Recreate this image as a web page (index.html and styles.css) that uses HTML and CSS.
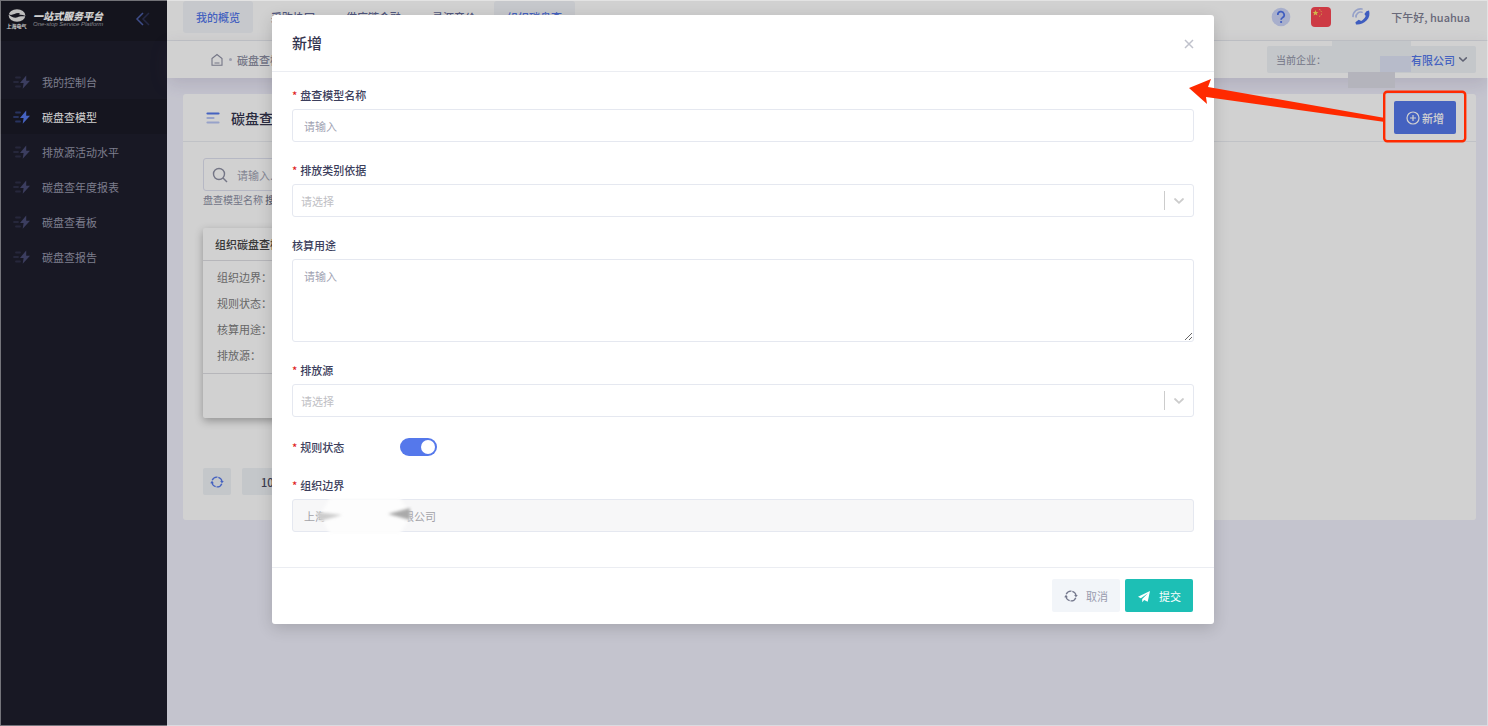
FILE: index.html
```
<!DOCTYPE html>
<html lang="zh-CN">
<head>
    <meta charset="UTF-8">
    <meta name="viewport" content="width=device-width, initial-scale=1.0">
    <title>碳盘查模型</title>
    <link rel="stylesheet" href="styles.css">
</head>
<body>
    <!-- shared icons -->
    <svg class="sprite" aria-hidden="true">
        <symbol id="icon-bolt" viewBox="0 0 18 14">
            <path d="M3 2.500h4M1 7h4M3 11.500h4" fill="none" stroke="currentColor" stroke-width="1.800" stroke-linecap="round" opacity=".4"/>
            <path d="M13.200 .4L7 8h3.600L9.700 13.800 17 5.800h-3.800z" fill="currentColor"/>
        </symbol>
        <symbol id="icon-refresh" viewBox="0 0 14 14">
            <path d="M2.200 5.300A5.100 5.100 0 0 1 12 6.500M11.800 8.700A5.100 5.100 0 0 1 2 7.500" fill="none" stroke="currentColor" stroke-width="1.300" stroke-dasharray="6.500 .9"/>
            <path d="M.2 8.200L2 5.800l1.900 2.400zM10.100 5.900h3.700L12 8.300z" fill="currentColor"/>
        </symbol>
        <symbol id="icon-chevron" viewBox="0 0 12 8">
            <path d="M2 2l4 3.800L10 2" fill="none" stroke="currentColor" stroke-width="1.800" stroke-linecap="round"/>
        </symbol>
    </svg>

    <div class="layout">
        <aside class="sidebar">
            <div class="brand">
                <div class="brand-mark">
                    <svg width="18" height="13" viewBox="0 0 18 13">
                        <ellipse cx="9" cy="6.500" rx="8.300" ry="6.200" fill="#e8e8e8"/>
                        <path d="M0 4.800C4 7.800 7 3.500 11 4.200c1.500.3 1 1.200-.5 1.600 3 0 5.500.2 7.500 1.500-4 .2-6-.4-8.500 1C7 9.500 3 8 0 4.800z" fill="#1a1a27"/>
                    </svg>
                    <span>上海电气</span>
                </div>
                <div class="brand-text">
                    <strong>一站式服务平台</strong>
                    <em>One-stop Service Platform</em>
                </div>
                <button class="collapse" type="button" aria-label="收起菜单">
                    <svg width="16" height="14" viewBox="0 0 16 14" fill="none" stroke-width="1.500">
                        <path d="M8 1L2 7l6 6" stroke="#4c5ea8"/>
                        <path d="M14 1L8 7l6 6" stroke="#2d3155"/>
                    </svg>
                </button>
            </div>
            <nav class="menu">
                <a href="#"><svg><use href="#icon-bolt"/></svg>我的控制台</a>
                <a href="#" class="active"><svg><use href="#icon-bolt"/></svg>碳盘查模型</a>
                <a href="#"><svg><use href="#icon-bolt"/></svg>排放源活动水平</a>
                <a href="#"><svg><use href="#icon-bolt"/></svg>碳盘查年度报表</a>
                <a href="#"><svg><use href="#icon-bolt"/></svg>碳盘查看板</a>
                <a href="#"><svg><use href="#icon-bolt"/></svg>碳盘查报告</a>
            </nav>
        </aside>

        <div class="page">
            <header class="topbar">
                <nav class="tabs">
                    <a href="#" class="active">我的概览</a>
                    <a href="#">采购协同</a>
                    <a href="#">供应链金融</a>
                    <a href="#">寻源竞价</a>
                    <a href="#" class="active">组织碳盘查</a>
                </nav>
                <div class="tools">
                    <button type="button" aria-label="帮助">
                        <svg width="20" height="20" viewBox="0 0 20 20">
                            <circle cx="10" cy="10" r="9.300" fill="#cdd6f9"/>
                            <path d="M6.800 8a3.200 3.200 0 1 1 4.800 2.600c-1.100.7-1.500 1-1.500 2.100" fill="none" stroke="#4d72ea" stroke-width="1.700"/>
                            <circle cx="10.100" cy="15" r="1.100" fill="#4d72ea"/>
                        </svg>
                    </button>
                    <button type="button" aria-label="语言">
                        <svg width="20" height="20" viewBox="0 0 20 20">
                            <rect width="20" height="20" rx="4" fill="#fb4754"/>
                            <path d="M4.500 3l.8 2h2.200L5.800 6.300l.6 2.100-1.900-1.200-1.900 1.200.6-2.100L1.500 5h2.200z" fill="#ffe15a"/>
                            <path d="M8.200 2.500l1.200.5M10 4.300l.8.800M10 7.500l.9-.6M8.200 9.300l1.100-.4" stroke="#ffe15a" stroke-width="1"/>
                        </svg>
                    </button>
                    <button type="button" aria-label="电话">
                        <svg width="20" height="20" viewBox="0 0 20 20">
                            <path d="M2 9.500A7.500 7.500 0 0 1 11 2M5 10a4.700 4.700 0 0 1 6-4.800" fill="none" stroke="#b8c5f5" stroke-width="1.700" stroke-linecap="round"/>
                            <path d="M15.500 4.200l2.500-.7c1 3.500.5 7-2.500 10s-7 4.500-10.500 4l-.6-2.300 3.300-2.500 2.500 1.200c2-1 3.800-2.800 4.500-4.800l-1.300-2z" fill="#4d72ea"/>
                        </svg>
                    </button>
                    <span class="greeting">下午好, huahua</span>
                </div>
            </header>

            <div class="subheader">
                <div class="crumbs">
                    <svg width="14" height="14" viewBox="0 0 14 14" fill="none" stroke="currentColor" stroke-width="1.100">
                        <path d="M2 5.500L7 1.500l5 4v6.800H2zM4.500 10h5"/>
                    </svg>
                    <i></i>
                    <span>碳盘查模型</span>
                </div>
                <button class="company" type="button">
                    <span>当前企业：</span>
                    <b>技有限公司</b>
                    <svg width="10" height="7"><use href="#icon-chevron"/></svg>
                    <span class="mask mask-top"></span>
                    <span class="mask mask-mid"></span>
                    <span class="mask mask-low"></span>
                </button>
            </div>

            <main class="panel">
                <div class="panel-head">
                    <svg width="14" height="12" viewBox="0 0 14 12" stroke-width="2.200" stroke-linecap="round">
                        <path d="M1.500 1.500h11" stroke="#5578eb"/>
                        <path d="M1.500 6h6M1.500 10.500h11" stroke="#b9c6f6"/>
                    </svg>
                    <h1>碳盘查模型</h1>
                    <button class="add" type="button">
                        <svg width="14" height="14" viewBox="0 0 14 14" fill="none" stroke="#fff" stroke-width="1.200">
                            <circle cx="7" cy="7" r="6"/>
                            <path d="M7 4v6M4 7h6"/>
                        </svg>
                        新增
                    </button>
                </div>
                <div class="panel-body">
                    <label class="search">
                        <svg width="16" height="16" viewBox="0 0 16 16" fill="none" stroke="currentColor" stroke-width="1.400">
                            <circle cx="7" cy="7" r="5.500"/>
                            <path d="M11 11l4 4"/>
                        </svg>
                        <input type="text" placeholder="请输入..." aria-label="搜索">
                    </label>
                    <p class="hint">盘查模型名称 <b>搜索</b></p>

                    <section class="model">
                        <h2>组织碳盘查模型</h2>
                        <ul>
                            <li>组织边界：</li>
                            <li>规则状态：</li>
                            <li>核算用途：</li>
                            <li>排放源：</li>
                        </ul>
                        <div class="model-foot"></div>
                    </section>

                    <div class="pager">
                        <button type="button" class="reload" aria-label="刷新"><svg width="14" height="14"><use href="#icon-refresh"/></svg></button>
                        <select aria-label="每页条数"><option>10</option><option>20</option></select>
                    </div>
                </div>
            </main>
        </div>
    </div>

    <div class="backdrop">
        <div class="modal" role="dialog" aria-labelledby="modal-title">
            <div class="modal-head">
                <h2 id="modal-title">新增</h2>
                <button class="close" type="button" aria-label="关闭">
                    <svg width="10" height="10" viewBox="0 0 10 10" stroke="currentColor" stroke-width="1.500"><path d="M1 1l8 8M9 1L1 9"/></svg>
                </button>
            </div>
            <form class="modal-body">
                <div class="field">
                    <label for="name" class="required">盘查模型名称</label>
                    <input id="name" type="text" placeholder="请输入">
                </div>
                <div class="field">
                    <label for="category" class="required">排放类别依据</label>
                    <div class="select">
                        <select id="category"><option>请选择</option></select>
                        <svg width="12" height="8"><use href="#icon-chevron"/></svg>
                    </div>
                </div>
                <div class="field">
                    <label for="usage">核算用途</label>
                    <textarea id="usage" placeholder="请输入"></textarea>
                </div>
                <div class="field">
                    <label for="source" class="required">排放源</label>
                    <div class="select">
                        <select id="source"><option>请选择</option></select>
                        <svg width="12" height="8"><use href="#icon-chevron"/></svg>
                    </div>
                </div>
                <div class="field-row">
                    <label for="status" class="required">规则状态</label>
                    <input id="status" class="switch" type="checkbox" checked>
                </div>
                <div class="field">
                    <label for="org" class="required">组织边界</label>
                    <div class="masked">
                        <input id="org" type="text" value="上海　　　　　　　限公司" disabled>
                        <svg class="smudge" width="110" height="44" viewBox="0 0 110 44">
                            <defs><filter id="soft"><feGaussianBlur stdDeviation="1.500"/></filter></defs>
                            <path d="M14 3h70l8 12 2 8-10 16H14L8 28l-4-8z" fill="#fdfdfd" filter="url(#soft)"/>
                            <path d="M0 17l26 3-22 6z" fill="#ccc" filter="url(#soft)"/>
                            <path d="M72 19l22-6v12z" fill="#aaa" filter="url(#soft)"/>
                        </svg>
                    </div>
                </div>
            </form>
            <div class="modal-foot">
                <button class="btn cancel" type="button"><svg width="14" height="14"><use href="#icon-refresh"/></svg>取消</button>
                <button class="btn submit" type="button">
                    <svg width="14" height="14" viewBox="0 0 14 14"><path d="M13 2L1 7.800l2.800 1.500L11 4.200 5.200 9.900v3.300l2-2.200 3.500 1.700z" fill="#fff"/></svg>
                    提交
                </button>
            </div>
        </div>
    </div>

    <!-- arrow from the add button to the dialog -->
    <svg class="callout" width="282" height="68" viewBox="0 0 282 68" aria-hidden="true">
        <path d="M3 12L25 3l-3 8 177 31v4L20 21l1 7z" fill="#ff2a00"/>
        <rect x="198.200" y="15.800" width="81" height="49.500" rx="3" fill="none" stroke="#ff2a00" stroke-width="2.400"/>
    </svg>
</body>
</html>
```
FILE: styles.css
```
* {
    box-sizing: border-box;
}

body {
    margin: 0;
    position: relative;
    min-height: 100vh;
    font-family: "Noto Sans CJK SC", "Noto Sans", sans-serif;
    font-size: 11px;
    color: #646c9a;
    background-color: #f0f0fc;
}

body::after {
    content: "";
    position: absolute;
    inset: 0;
    border: 1px solid rgba(255, 255, 255, 0.4);
    pointer-events: none;
    z-index: 30;
}

h1, h2, p, ul {
    margin: 0;
    padding: 0;
}

ul {
    list-style: none;
}

a {
    color: inherit;
    text-decoration: none;
}

button, input, select, textarea {
    font-family: inherit;
    font-size: 11px;
    color: inherit;
}

button {
    border: none;
    padding: 0;
    background: none;
    cursor: pointer;
}

svg {
    display: block;
    flex: none;
}

.sprite {
    position: absolute;
    width: 0;
    height: 0;
}

.layout {
    display: flex;
    min-height: 100vh;
}

/* sidebar */
.sidebar {
    width: 167px;
    flex: none;
    background-color: #1e1e2d;
}

.brand {
    display: flex;
    align-items: center;
    height: 41px;
    padding: 0 16px 4px 6px;
    background-color: #191924;
    color: #fff;
}

.brand-mark {
    display: flex;
    flex-direction: column;
    align-items: center;
    width: 21px;
    font-size: 5px;
    font-weight: bold;
    line-height: 7px;
    white-space: nowrap;
}

.brand-text {
    margin-left: 6px;
    white-space: nowrap;
}

.brand-text strong {
    display: block;
    font-size: 10px;
    font-style: italic;
    font-weight: 900;
    line-height: 11px;
}

.brand-text em {
    display: block;
    font-family: "Liberation Sans", sans-serif;
    font-size: 6px;
    line-height: 7px;
    color: #a5a5ae;
}

.collapse {
    margin-left: auto;
}

.menu {
    padding-top: 23px;
}

.menu a {
    display: flex;
    align-items: center;
    gap: 11px;
    height: 35px;
    padding-left: 13px;
    color: #9899ac;
}

.menu svg {
    width: 18px;
    height: 14px;
    color: #494b74;
}

.menu .active {
    background-color: #1a1a27;
    color: #fff;
}

.menu .active svg {
    color: #5578eb;
}

/* top area */
.page {
    flex: 1;
    min-width: 0;
}

.topbar {
    display: flex;
    justify-content: space-between;
    height: 41px;
    padding: 1px 18px 0 16px;
    background-color: #fff;
    border-bottom: 1px solid #ebedf2;
}

.tabs {
    display: flex;
    gap: 5px;
    font-weight: 500;
}

.tabs a {
    height: 32px;
    padding: 0 13px;
    line-height: 33px;
    border-radius: 3px;
}

.tabs .active {
    background-color: #f2f5f9;
    color: #5578eb;
}

.tools {
    display: flex;
    align-items: center;
    gap: 20px;
    padding-bottom: 7px;
}

.greeting {
    color: #7f8194;
    font-weight: 500;
}

.subheader {
    display: flex;
    align-items: center;
    justify-content: space-between;
    height: 37px;
    padding: 0 12px 0 43px;
    background-color: #fff;
    box-shadow: 0 6px 18px rgba(82, 63, 105, 0.15);
}

.crumbs {
    display: flex;
    align-items: center;
    gap: 5px;
    color: #8e90a4;
    font-weight: 500;
}

.crumbs i {
    width: 3px;
    height: 3px;
    border-radius: 50%;
    background-color: #c0c2d6;
}

.company {
    position: relative;
    display: flex;
    align-items: center;
    width: 209px;
    height: 27px;
    padding: 0 8px 0 9px;
    background-color: #eff3f7;
    border-radius: 2px;
    color: #8e90a4;
    font-size: 10px;
}

.company b {
    margin: 0 3px 0 auto;
    color: #5578eb;
    font-size: 11px;
    font-weight: 500;
}

.company svg {
    color: #74788d;
}

.mask {
    position: absolute;
}

.mask-top {
    right: 65px;
    top: -5px;
    width: 79px;
    height: 31px;
    background-color: #eff3f7;
}

.mask-mid {
    right: 65px;
    top: 10px;
    width: 31px;
    height: 16px;
    background-color: #e0e5f7;
}

.mask-low {
    right: 81px;
    top: 26px;
    width: 47px;
    height: 16px;
    background-color: #dcdce6;
}

/* list panel */
.panel {
    margin: 16px 12px 0 16px;
    background-color: #fff;
    border-radius: 3px;
}

.panel-head {
    display: flex;
    align-items: center;
    height: 48px;
    padding: 0 20px 0 23px;
    border-bottom: 1px solid #ebedf2;
}

.panel-head h1 {
    margin-left: 11px;
    font-size: 14px;
    font-weight: 500;
    color: #33344e;
}

.add {
    display: flex;
    align-items: center;
    justify-content: center;
    gap: 2px;
    width: 62px;
    height: 33px;
    margin-left: auto;
    background-color: #5578eb;
    border-radius: 2px;
    color: #fff;
    font-weight: 500;
}

.panel-body {
    padding: 16px 20px 25px;
}

.search {
    display: flex;
    align-items: center;
    width: 300px;
    height: 33px;
    padding-left: 8px;
    border: 1px solid #dfe1f0;
    border-radius: 3px;
    color: #8e90a4;
}

.search input {
    flex: 1;
    margin-left: 9px;
    padding: 0;
    border: none;
    background: none;
}

.hint {
    height: 37px;
    font-size: 10px;
    line-height: 18px;
    color: #8e90a4;
}

.hint b {
    font-weight: 500;
    color: #74788d;
}

.model {
    width: 320px;
    background-color: #fff;
    border-radius: 2px;
    box-shadow: 0 3px 8px rgba(0, 0, 0, 0.3);
}

.model h2 {
    padding-left: 12px;
    border-bottom: 1px solid #dfdfe3;
    font-size: 11px;
    font-weight: 500;
    line-height: 32px;
    color: #444;
}

.model ul {
    padding: 3px 14px 5px;
    border-bottom: 1px solid #dfdfe3;
    color: #7d7d7d;
}

.model li {
    line-height: 26px;
}

.model-foot {
    height: 44px;
}

.pager {
    display: flex;
    gap: 11px;
    margin-top: 50px;
}

.pager button, .pager select {
    height: 27px;
    background-color: #eff3f7;
    border: none;
    border-radius: 2px;
}

.pager select {
    appearance: none;
    width: 60px;
    padding: 0 19px;
    color: #4a4b62;
    font-weight: 500;
}

.pager .reload {
    display: flex;
    align-items: center;
    justify-content: center;
    width: 28px;
    color: #5578eb;
}

/* dialog */
.backdrop {
    position: absolute;
    inset: 0;
    z-index: 10;
    padding: 15px 274px 0 272px;
    background-color: rgba(0, 0, 0, 0.18);
}

.modal {
    background-color: #fff;
    border-radius: 3px;
    box-shadow: 0 4px 16px rgba(0, 0, 0, 0.16);
}

.modal-head {
    display: flex;
    align-items: center;
    justify-content: space-between;
    height: 57px;
    padding: 0 20px;
    border-bottom: 1px solid #ebedf2;
}

.modal-head h2 {
    padding-bottom: 2px;
    font-size: 15px;
    font-weight: 500;
    color: #33344e;
}

.close {
    padding-top: 2px;
    color: #c0c2cc;
}

.modal-body {
    padding: 14px 20px 16px;
}

.field {
    margin-bottom: 19px;
}

.field label, .field-row label {
    display: block;
    font-weight: 500;
    line-height: 18px;
    color: #3c3e5c;
}

.field label {
    margin-bottom: 5px;
}

.required::before {
    content: "*";
    margin-right: 3px;
    color: #e02020;
}

.field input, .field select, .field textarea {
    display: block;
    width: 100%;
    height: 33px;
    padding: 0 11px;
    background-color: #fff;
    border: 1px solid #e5e8f0;
    border-radius: 3px;
}

.field textarea {
    height: 83px;
    padding: 8px 11px;
    line-height: 16px;
}

.field select {
    appearance: none;
    padding: 0 8px;
    color: #c0c0c4;
}

.field input:disabled {
    background-color: #f7f7f8;
    color: #a3a3a8;
}

::placeholder {
    color: #a1a3b3;
    opacity: 1;
}

.select {
    position: relative;
}

.select::after {
    content: "";
    position: absolute;
    top: 7px;
    right: 29px;
    width: 1px;
    height: 19px;
    background-color: #ccc;
}

.select svg {
    position: absolute;
    top: 13px;
    right: 9px;
    color: #ccc;
}

.field-row {
    display: flex;
    align-items: center;
    height: 21px;
    margin-bottom: 19px;
}

.field-row label {
    width: 108px;
}

.switch {
    appearance: none;
    display: flex;
    justify-content: flex-end;
    width: 37px;
    height: 18px;
    margin: 0;
    padding: 2px;
    border-radius: 9px;
    background-color: #5578eb;
}

.switch::before {
    content: "";
    width: 14px;
    height: 14px;
    border-radius: 50%;
    background-color: #fff;
}

.masked {
    position: relative;
}

.smudge {
    position: absolute;
    top: -4px;
    left: 24px;
}

.modal-foot {
    display: flex;
    justify-content: flex-end;
    gap: 5px;
    padding: 11px 21px 12px;
    border-top: 1px solid #ebedf2;
}

.btn {
    display: flex;
    align-items: center;
    justify-content: center;
    gap: 8px;
    width: 68px;
    height: 33px;
    border-radius: 2px;
}

.cancel {
    background-color: #f2f5f9;
    color: #9a9cae;
}

.cancel svg {
    color: #74788d;
}

.submit {
    background-color: #1dbfb5;
    color: #fff;
}

.callout {
    position: absolute;
    top: 76px;
    right: 20px;
    z-index: 20;
    pointer-events: none;
}
```
